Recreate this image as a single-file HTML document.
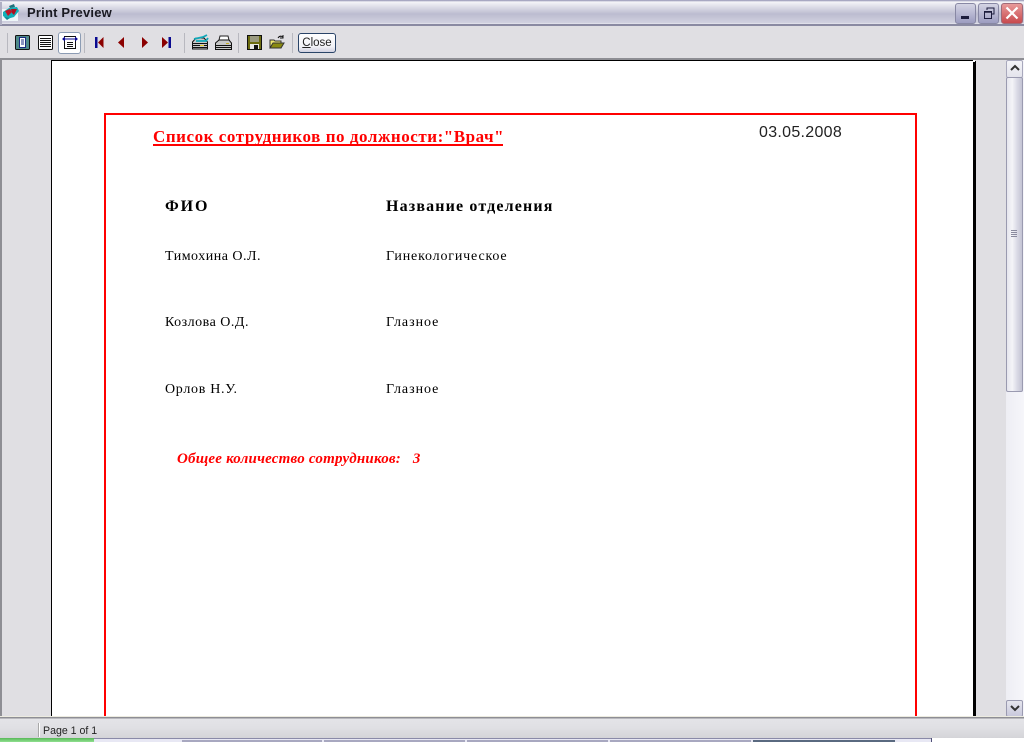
<!DOCTYPE html>
<html>
<head>
<meta charset="utf-8">
<style>
html,body{margin:0;padding:0;width:1024px;height:742px;overflow:hidden;background:#e0dfe3;}
div,span,svg{position:absolute;display:block;}
.t{white-space:nowrap;font-family:"Liberation Serif",serif;color:#000;line-height:16px;}
.s{font-family:"Liberation Sans",sans-serif;white-space:nowrap;}
.sep{width:1px;height:20px;top:33px;background:#b8b8bf;}
.r{font-size:14px;letter-spacing:.5px;}
.h{font-size:16px;font-weight:bold;letter-spacing:1.15px;}
</style>
</head>
<body>
<!-- title bar -->
<div style="left:0;top:0;width:1024px;height:26px;background:linear-gradient(#8f8fb0 0,#f4f4f8 2px,#e6e6ee 5px,#bcbcd0 14px,#d2d2e0 23px,#ececf2 24px);"></div>
<div style="left:0;top:24px;width:1024px;height:2px;background:#8a8aa2;"></div>
<div style="left:0;top:2px;width:2px;height:23px;background:#b0b0c4;"></div>
<svg style="left:2px;top:3px" width="17" height="18" viewBox="0 0 17 18">
<rect x="0" y="6" width="16" height="12" fill="#eef6f8"/>
<path d="M1 9L7 5L15 4L17 8L12 14L5 16L1 13Z" fill="#10b0b8"/>
<path d="M3 8L8 6L10 9L6 13Z" fill="#c01828"/>
<path d="M9 6L15 6L12 12L10 10Z" fill="#b01020"/>
<path d="M7 3L12 1L13 4L8 5Z" fill="#20707a"/>
<path d="M2 14L8 15L5 17Z" fill="#0d8890"/>
</svg>
<div class="s" style="left:27px;top:5px;font-size:13px;font-weight:bold;color:#1a1a22;line-height:16px;letter-spacing:.2px;">Print Preview</div>
<!-- window buttons -->
<div style="left:955px;top:3px;width:19px;height:19px;border:1px solid #8888a4;border-radius:3px;background:linear-gradient(#d4d4e4,#9c9cc0);"></div>
<div style="left:961px;top:16px;width:8px;height:3px;background:#1c1c3c;"></div>
<div style="left:978px;top:3px;width:19px;height:19px;border:1px solid #8888a4;border-radius:3px;background:linear-gradient(#d4d4e4,#9c9cc0);"></div>
<svg style="left:983px;top:7px" width="13" height="13" viewBox="0 0 13 13"><path d="M4 3V1H11V7H8" fill="none" stroke="#1c1c3c" stroke-width="1"/><rect x="1.5" y="4.5" width="7" height="7" fill="none" stroke="#1c1c3c"/><path d="M1 5H9" stroke="#1c1c3c" stroke-width="1.5"/></svg>
<div style="left:1001px;top:3px;width:20px;height:19px;border:1px solid #a06a78;border-radius:3px;background:linear-gradient(#e89a9a,#c84a4e);"></div>
<svg style="left:1004px;top:5px" width="16" height="16" viewBox="0 0 16 16"><path d="M2.5 2.5L13.5 13.5M13.5 2.5L2.5 13.5" stroke="#fff" stroke-width="2.2"/></svg>

<!-- toolbar -->
<div style="left:0;top:26px;width:1024px;height:32px;background:#e0dfe3;"></div>
<div class="sep" style="left:7px"></div>
<div class="sep" style="left:84px"></div>
<div class="sep" style="left:184px"></div>
<div class="sep" style="left:238px"></div>
<div class="sep" style="left:292px"></div>
<svg style="left:15px;top:35px" width="15" height="15" viewBox="0 0 15 15"><rect x=".5" y=".5" width="14" height="14" rx="1" fill="#4f8a8a" stroke="#111"/><rect x="4.5" y="2.5" width="6" height="10" fill="#fff" stroke="#1a2a80"/><path d="M6 5H9M6 7H9M6 9H9" stroke="#1a2a80"/></svg>
<svg style="left:38px;top:35px" width="15" height="15" viewBox="0 0 15 15"><rect x=".5" y=".5" width="14" height="14" rx="1" fill="#fff" stroke="#111"/><path d="M2 3.5H13M2 5.5H13M2 7.5H13M2 9.5H13M2 11.5H13" stroke="#111"/></svg>
<div style="left:58px;top:32px;width:21px;height:20px;border:1px solid #8c9cb4;border-radius:3px;background:#fff;"></div>
<svg style="left:62px;top:35px" width="16" height="15" viewBox="0 0 16 15"><path d="M2.5 4.5V13.5H13.5V4.5" fill="#fff" stroke="#111"/><path d="M2 1.5H14" stroke="#111"/><path d="M5 7.5H11M5 9.5H11M5 11.5H11" stroke="#111"/><path d="M3 4H13" stroke="#0a0a90"/><path d="M0 4L3 1.5V6.5ZM16 4L13 1.5V6.5Z" fill="#0a0a90"/></svg>
<!-- nav -->
<svg style="left:94px;top:37px" width="80" height="13" viewBox="0 0 80 13">
<rect x="1" y="0" width="2.5" height="11" fill="#0a0a90"/><path d="M9.5 0V11L4 5.5Z" fill="#8b0000"/>
<path d="M30 0V11L24 5.5Z" fill="#8b0000"/>
<path d="M48 0V11L54 5.5Z" fill="#8b0000"/>
<path d="M68 0V11L74 5.5Z" fill="#8b0000"/><rect x="74.5" y="0" width="2.5" height="11" fill="#0a0a90"/>
</svg>
<!-- print setup / print -->
<svg style="left:191px;top:34px" width="18" height="17" viewBox="0 0 18 17"><path d="M1.5 8L5 4H13L16.5 8V15H1.5Z" fill="#c8c8c8" stroke="#111"/><path d="M2 9.5H16M2 11.5H16M2 13.5H16" stroke="#111"/><rect x="9" y="11" width="4" height="1" fill="#e0c820"/><path d="M3 5L12 3L16 1M5 7H15L17 4" fill="none" stroke="#10a8b8" stroke-width="1.8"/></svg>
<svg style="left:215px;top:35px" width="17" height="16" viewBox="0 0 17 16"><path d="M5 1H13L14 5H4Z" fill="#fff" stroke="#222"/><path d="M.5 8L4 5H14L16.5 8V14.5H.5Z" fill="#c8c8c8" stroke="#111"/><path d="M1 10.5H16M1 12.5H16" stroke="#111"/><rect x="11" y="8" width="3" height="1" fill="#c0a820"/></svg>
<!-- save -->
<svg style="left:247px;top:35px" width="15" height="15" viewBox="0 0 15 15"><rect x=".5" y=".5" width="14" height="14" fill="#6c6c10" stroke="#111"/><rect x="3" y="1" width="9" height="6" fill="#9a9a80"/><rect x="3" y="9" width="9" height="5" fill="#e8e8e8"/><rect x="7" y="10" width="4" height="4" fill="#111"/></svg>
<!-- open -->
<svg style="left:269px;top:34px" width="16" height="16" viewBox="0 0 16 16"><path d="M1 6H5L6 7H12V14H1Z" fill="#f0e870" stroke="#333"/><path d="M1 14L4 9H15L12 14Z" fill="#8a8a10" stroke="#333"/><path d="M9 4Q11 1 14 3M14 1V4H11" fill="none" stroke="#111"/></svg>
<!-- close -->
<div style="left:298px;top:33px;width:36px;height:18px;border:1px solid #2a4468;border-radius:3px;background:linear-gradient(#fff,#f2f2f6 70%,#d0d0e0);"></div>
<div class="s" style="left:298px;top:36px;width:38px;text-align:center;font-size:11.5px;line-height:15px;color:#222;"><u>C</u>lose</div>

<!-- client -->
<div style="left:0;top:58px;width:1024px;height:2px;background:#8e8e94;"></div>
<div style="left:0;top:60px;width:2px;height:657px;background:#8e8e94;"></div>
<div style="left:51px;top:60px;width:923px;height:1px;background:#000;"></div>
<div style="left:51px;top:60px;width:1px;height:657px;background:#000;"></div>
<div style="left:52px;top:61px;width:921px;height:656px;background:#fff;"></div>
<div style="left:973px;top:61px;width:3px;height:656px;background:#000;"></div>
<div style="left:973px;top:60px;width:2px;height:2px;background:#fff;"></div>

<!-- red frame -->
<div style="left:104px;top:113px;width:813px;height:2px;background:#f00;"></div>
<div style="left:104px;top:113px;width:2px;height:604px;background:#f00;"></div>
<div style="left:915px;top:113px;width:2px;height:604px;background:#f00;"></div>

<!-- report text -->
<div class="t" style="left:153px;top:129px;font-size:17px;font-weight:bold;color:#f00;letter-spacing:.55px;">Список сотрудников по должности:"Врач"</div>
<div style="left:153px;top:144px;width:350px;height:2px;background:#f00;"></div>
<div class="s" style="left:759px;top:124px;font-size:16px;line-height:18px;color:#222;letter-spacing:.3px;">03.05.2008</div>
<div class="t h" style="left:165px;top:199px;letter-spacing:1.9px;">ФИО</div>
<div class="t h" style="left:386px;top:199px;">Название отделения</div>
<div class="t r" style="left:165px;top:249px;">Тимохина О.Л.</div>
<div class="t r" style="left:386px;top:249px;letter-spacing:.83px;">Гинекологическое</div>
<div class="t r" style="left:165px;top:315px;">Козлова О.Д.</div>
<div class="t r" style="left:386px;top:315px;letter-spacing:.95px;">Глазное</div>
<div class="t r" style="left:165px;top:382px;letter-spacing:.7px;">Орлов Н.У.</div>
<div class="t r" style="left:386px;top:382px;letter-spacing:.95px;">Глазное</div>
<div class="t" style="left:177px;top:451px;font-size:15px;font-weight:bold;font-style:italic;color:#f00;white-space:pre;letter-spacing:.2px;">Общее количество сотрудников:   3</div>

<!-- scrollbar -->
<div style="left:1006px;top:60px;width:18px;height:657px;background:linear-gradient(90deg,#eeeef4,#f6f6fa);"></div>
<div style="left:1006px;top:60px;width:15px;height:16px;border:1px solid #a8a8bc;border-radius:2px;background:linear-gradient(#f4f4f8,#e4e4ec);"></div>
<svg style="left:1008px;top:63px" width="14" height="10" viewBox="0 0 14 10"><path d="M3 7L7 3L11 7" fill="none" stroke="#333" stroke-width="2"/></svg>
<div style="left:1006px;top:77px;width:15px;height:313px;border:1px solid #9a9ab0;border-radius:2px;background:linear-gradient(90deg,#e6e6ee,#f4f4f8 35%,#d8d8e4 70%,#c4c4d4);"></div>
<svg style="left:1010px;top:229px" width="8" height="10" viewBox="0 0 8 10"><path d="M1 1.5H7M1 3.5H7M1 5.5H7M1 7.5H7" stroke="#8a8a9e"/></svg>
<div style="left:1006px;top:700px;width:15px;height:15px;border:1px solid #9a9ab0;border-radius:2px;background:linear-gradient(#e6e6ee,#c8c8dc);"></div>
<svg style="left:1008px;top:703px" width="14" height="10" viewBox="0 0 14 10"><path d="M3 3L7 7L11 3" fill="none" stroke="#333" stroke-width="2"/></svg>

<!-- status bar -->
<div style="left:0;top:717px;width:1024px;height:21px;background:linear-gradient(#8e8e94 0,#8e8e94 1px,#e4e4e8 2px,#e0e0e4 50%,#d4d4d8);"></div>
<div style="left:0;top:716px;width:1024px;height:1px;background:#ecebe0;"></div>
<div style="left:38px;top:723px;width:1px;height:14px;background:#a8a8a8;"></div>
<div style="left:39px;top:723px;width:1px;height:14px;background:#fff;"></div>
<div class="s" style="left:43px;top:724px;font-size:10.6px;line-height:14px;color:#222;">Page 1 of 1</div>

<!-- bottom strip -->
<div style="left:0;top:738px;width:1024px;height:4px;background:#fff;"></div>
<div style="left:0;top:738px;width:94px;height:4px;background:linear-gradient(#58b858,#90e090);"></div>
<div style="left:94px;top:738px;width:838px;height:4px;background:#e8e8f4;"></div>
<div style="left:94px;top:738px;width:838px;height:1px;background:#8a8aa8;"></div>
<div style="left:182px;top:740px;width:140px;height:2px;background:#a8a8c0;"></div>
<div style="left:324px;top:740px;width:141px;height:2px;background:#a8a8c0;"></div>
<div style="left:467px;top:740px;width:141px;height:2px;background:#a8a8c0;"></div>
<div style="left:610px;top:740px;width:141px;height:2px;background:#a8a8c0;"></div>
<div style="left:753px;top:740px;width:142px;height:2px;background:#5a6a80;"></div>
<div style="left:931px;top:738px;width:1px;height:4px;background:#505078;"></div>
</body>
</html>
